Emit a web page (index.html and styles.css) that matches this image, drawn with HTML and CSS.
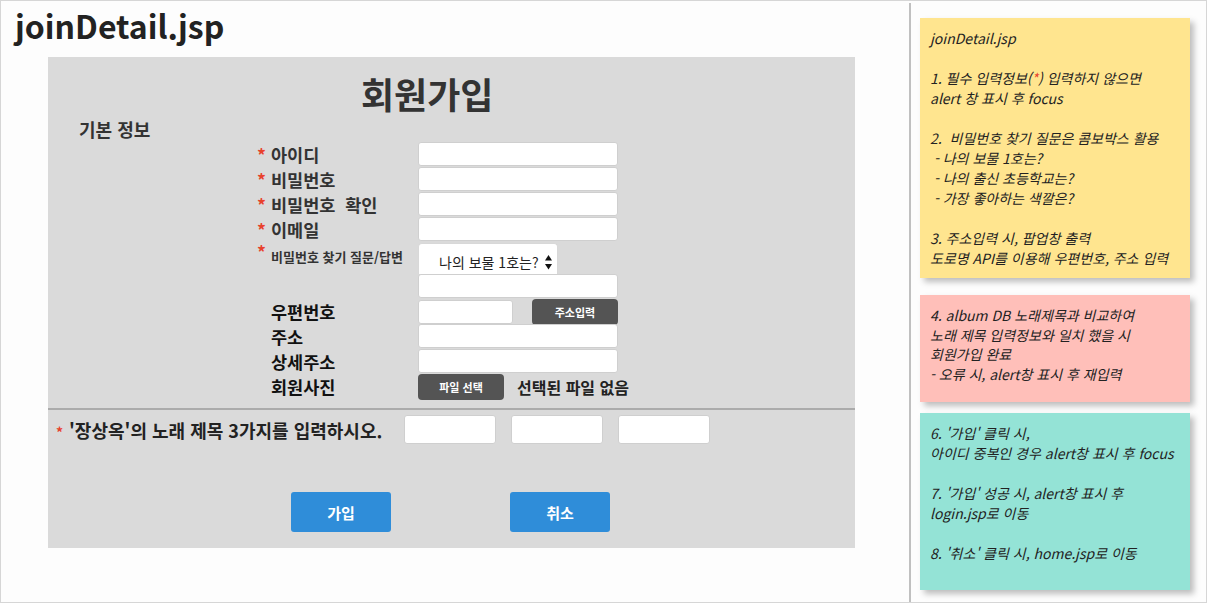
FILE: index.html
```html
<!DOCTYPE html>
<html lang="ko">

<head>
    <meta charset="UTF-8">
    <title>joinDetail.jsp</title>
    <link rel="stylesheet" href="styles.css">
</head>

<body>
    <div class="frame">
        <!-- 화면 영역 -->
        <div class="main">
            <h1 class="page-title">joinDetail.jsp</h1>

            <div class="panel">
                <h2 class="join-title">회원가입</h2>
                <h3 class="section-title">기본 정보</h3>

                <div class="fields">
                    <div class="label"><span class="star">*</span>아이디</div>
                    <div class="field"><input class="text-input" type="text"></div>

                    <div class="label"><span class="star">*</span>비밀번호</div>
                    <div class="field"><input class="text-input" type="password"></div>

                    <div class="label"><span class="star">*</span>비밀번호&nbsp; 확인</div>
                    <div class="field"><input class="text-input" type="password"></div>

                    <div class="label"><span class="star">*</span>이메일</div>
                    <div class="field"><input class="text-input" type="text"></div>

                    <div class="label label-top"><span class="star">*</span><span class="label-small">비밀번호 찾기 질문/답변</span></div>
                    <div class="field">
                        <div class="select-box">
                            <span>나의 보물 1호는?</span>
                            <svg class="select-arrows" width="9" height="16" viewBox="0 0 9 16">
                                <path d="M1 6.5 L4.5 1 L8 6.5 Z" fill="#111" />
                                <path d="M1 10 L8 10 L4.5 15.5 Z" fill="#111" />
                            </svg>
                        </div>
                    </div>

                    <div class="label"></div>
                    <div class="field"><input class="text-input" type="text"></div>

                    <div class="label label-plain">우편번호</div>
                    <div class="field field-center">
                        <input class="text-input text-input-short" type="text">
                        <button class="btn-dark btn-addr">주소입력</button>
                    </div>

                    <div class="label label-plain">주소</div>
                    <div class="field"><input class="text-input" type="text"></div>

                    <div class="label label-plain">상세주소</div>
                    <div class="field"><input class="text-input" type="text"></div>

                    <div class="label label-plain">회원사진</div>
                    <div class="field field-center">
                        <button class="btn-dark">파일 선택</button>
                        <span class="file-none">선택된 파일 없음</span>
                    </div>
                </div>

                <hr class="split">

                <div class="song-row">
                    <div class="song-label"><span class="star star-song">*</span>'장상옥'의 노래 제목 3가지를 입력하시오.</div>
                    <div class="song-inputs">
                        <input class="song-input" type="text">
                        <input class="song-input" type="text">
                        <input class="song-input" type="text">
                    </div>
                </div>

                <div class="actions">
                    <button class="btn-blue">가입</button>
                    <button class="btn-blue">취소</button>
                </div>
            </div>
        </div>

        <div class="divider"></div>

        <!-- 설명 메모 -->
        <div class="notes">
            <div class="note note-yellow">
                <p>joinDetail.jsp</p>
                <p>1. 필수 입력정보(<span class="red">*</span>) 입력하지 않으면<br>alert 창 표시 후 focus</p>
                <p>2. &nbsp;비밀번호 찾기 질문은 콤보박스 활용<br>&nbsp;- 나의 보물 1호는?<br>&nbsp;- 나의 출신 초등학교는?<br>&nbsp;- 가장 좋아하는 색깔은?</p>
                <p>3. 주소입력 시, 팝업창 출력<br>도로명 API를 이용해 우편번호, 주소 입력</p>
            </div>
            <div class="note note-pink">
                <p>4. album DB 노래제목과 비교하여<br>노래 제목 입력정보와 일치 했을 시<br>회원가입 완료<br>- 오류 시, alert창 표시 후 재입력</p>
            </div>
            <div class="note note-teal">
                <p>6. '가입' 클릭 시,<br>아이디 중복인 경우 alert창 표시 후 focus</p>
                <p>7. '가입' 성공 시, alert창 표시 후<br>login.jsp로 이동</p>
                <p>8. '취소' 클릭 시, home.jsp로 이동</p>
            </div>
        </div>
    </div>
</body>

</html>
```

FILE: styles.css
```css
* {
    -webkit-font-smoothing: antialiased;
}

body {
    margin: 0;
    font-family: "Noto Sans CJK KR", sans-serif;
    color: #222;
    background: #fff;
}

.frame {
    width: 1207px;
    height: 603px;
    box-sizing: border-box;
    border: 1px solid #d6d6d6;
    display: flex;
    background: #fdfdfd;
}

/* 왼쪽 화면 */
.main {
    width: 908px;
}

.page-title {
    margin: 0;
    padding: 6px 0 0 14px;
    font-size: 32px;
    line-height: 36px;
    font-weight: 700;
    color: #222;
}

.panel {
    width: 807px;
    height: 491px;
    box-sizing: border-box;
    margin: 14px 0 0 47px;
    padding-top: 16px;
    background: #dadada;
}

.join-title {
    margin: 0 0 0 313px;
    font-size: 36px;
    line-height: 40px;
    font-weight: 700;
    color: #333;
}

.section-title {
    margin: 6px 0 0 31px;
    font-size: 18px;
    line-height: 20px;
    font-weight: 700;
    color: #333;
}

.fields {
    margin: 3px 0 0 209px;
    display: grid;
    grid-template-columns: 161px 240px;
    grid-template-rows: 25px 25px 25px 25px 32px 25px 25px 25px 25px 26px;
}

.label {
    font-size: 17.5px;
    line-height: 25px;
    font-weight: 700;
    color: #333;
    white-space: nowrap;
}

.label-plain {
    padding-left: 14px;
    color: #111;
}

.label-top {
    line-height: 20px;
}

.label-small {
    font-size: 13px;
    vertical-align: -3px;
}

.star {
    display: inline-block;
    width: 14px;
    color: #e8412c;
}

.field {
    display: flex;
    align-items: flex-start;
}

.field-center {
    align-items: center;
}

.text-input {
    display: block;
    width: 200px;
    height: 24px;
    box-sizing: border-box;
    margin: 0;
    padding: 0 4px;
    border: 1px solid #cfcfcf;
    border-radius: 3px;
    background: #fff;
    outline: none;
}

.text-input-short {
    width: 95px;
}

.select-box {
    width: 140px;
    height: 31px;
    box-sizing: border-box;
    margin-top: 1px;
    padding: 5px 0 0 20px;
    display: flex;
    align-items: center;
    border: 1px solid #d8d8d8;
    border-bottom: none;
    border-radius: 4px 4px 0 0;
    background: #fff;
    font-size: 14px;
    color: #222;
}

.select-arrows {
    margin-left: 5px;
}

.btn-dark {
    width: 86px;
    height: 26px;
    padding: 0;
    border: none;
    border-radius: 4px;
    background: #545454;
    color: #fff;
    font-family: "Noto Sans CJK KR", sans-serif;
    font-size: 11px;
    font-weight: 700;
}

.btn-addr {
    margin-left: 19px;
}

.file-none {
    margin-left: 13px;
    font-size: 16px;
    font-weight: 700;
    color: #222;
}

.split {
    margin: 8px 0 0;
    height: 0;
    border: none;
    border-top: 2px solid #ababab;
}

.song-row {
    margin-top: 5px;
    padding-left: 8px;
    display: flex;
    align-items: center;
}

.song-label {
    width: 348px;
    font-size: 18px;
    font-weight: 700;
    color: #222;
    white-space: nowrap;
}

.star-song {
    width: 13px;
    font-size: 14px;
}

.song-inputs {
    display: flex;
    gap: 15px;
}

.song-input {
    width: 92px;
    height: 29px;
    box-sizing: border-box;
    margin: 0;
    border: 1px solid #cfcfcf;
    border-radius: 3px;
    background: #fff;
    outline: none;
}

.actions {
    margin: 48px 0 0 243px;
    display: flex;
    gap: 119px;
}

.btn-blue {
    width: 100px;
    height: 40px;
    padding: 0;
    border: none;
    border-radius: 3px;
    background: #2f8dd9;
    color: #fff;
    font-family: "Noto Sans CJK KR", sans-serif;
    font-size: 15px;
    font-weight: 700;
}

.divider {
    width: 2px;
    margin-top: 2px;
    background: #c0c0c0;
}

/* 오른쪽 메모 */
.notes {
    padding: 17px 0 0 9px;
}

.note {
    width: 270px;
    box-sizing: border-box;
    padding: 10px 10px;
    font-size: 14px;
    line-height: 20px;
    font-style: italic;
    color: #222;
    box-shadow: 4px 4px 6px rgba(0, 0, 0, 0.25);
}

.note p {
    margin: 0 0 20px;
}

.note p:last-child {
    margin-bottom: 0;
}

.note-yellow {
    height: 260px;
    background: #ffe58f;
}

.note-pink {
    height: 107px;
    margin-top: 17px;
    padding-top: 11px;
    line-height: 19.5px;
    background: #ffbfb9;
}

.note-teal {
    height: 177px;
    margin-top: 11px;
    background: #94e3d6;
}

.red {
    color: #e8412c;
}
```
